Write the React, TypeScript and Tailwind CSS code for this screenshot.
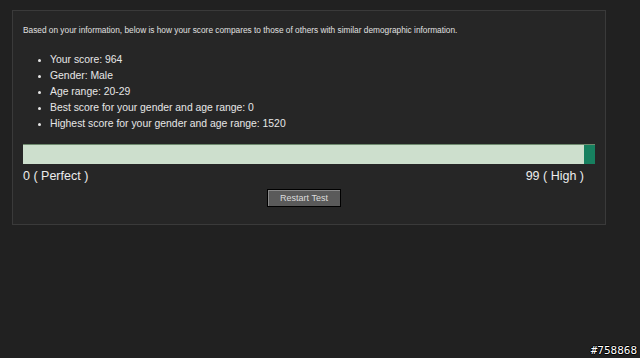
import React from 'react';

const stats = [
  'Your score: 964',
  'Gender: Male',
  'Age range: 20-29',
  'Best score for your gender and age range: 0',
  'Highest score for your gender and age range: 1520',
];

const App: React.FC = () => {
  return (
    <div
      className="relative w-[640px] h-[358px] bg-[#212121] overflow-hidden pt-[10px] pl-[12px]"
      style={{ fontFamily: '"Liberation Sans", Arial, sans-serif' }}
    >
      <div className="w-[594px] h-[215px] bg-[#262626] border border-[#3a3a3a] pt-[13px] px-[10px]">
        <p className="text-[8.3px] leading-[12px] text-[#e0e0e0]">
          Based on your information, below is how your score compares to those of others with similar demographic information.
        </p>

        <ul className="mt-[16px] pl-[27px] list-disc text-[10.4px] leading-[16px] text-[#e6e6e6] marker:text-[9px]">
          {stats.map((s) => (
            <li key={s}>{s}</li>
          ))}
        </ul>

        <div className="mt-[12px] flex h-[20px] w-[572px] border-t border-[#6e8a6e] bg-[#cddfcd]">
          <div className="flex-1" />
          <div className="w-[11px] bg-[#17805f]" />
        </div>

        <div className="mt-[1px] flex justify-between pr-[11px] text-[12.5px] leading-[22px] text-[#ececec]">
          <span>0 ( Perfect )</span>
          <span>99 ( High )</span>
        </div>

        <div className="mt-[2px] flex justify-center pr-[10px]">
          <button className="w-[74px] h-[18px] bg-[#5a5a5a] border border-black shadow-[inset_1px_1px_0_#8a8a8a] text-[9px] leading-[16px] text-[#dcdcdc]">
            Restart Test
          </button>
        </div>
      </div>

      <div
        className="absolute right-[3px] bottom-[1px] text-[11px] leading-[12px] text-white"
        style={{ fontFamily: '"DejaVu Sans Mono", monospace', textShadow: '1px 0 #000, -1px 0 #000, 0 1px #000, 0 -1px #000' }}
      >
        #758868
      </div>
    </div>
  );
};

export default App;
